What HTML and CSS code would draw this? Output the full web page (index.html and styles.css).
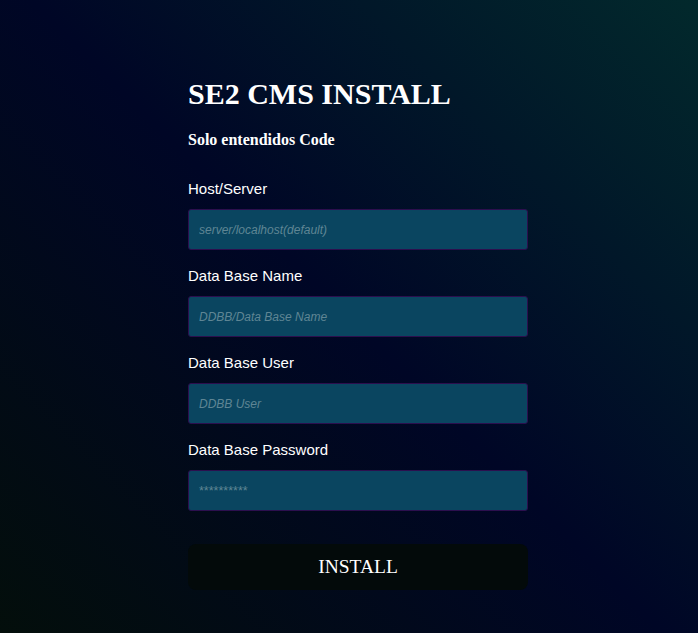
FILE: index.html
```html
<!DOCTYPE html>
<html lang="es">
<head>
<meta charset="utf-8">
<title>SE2 CMS INSTALL</title>
<link rel="stylesheet" href="styles.css">
</head>
<body>
<main class="page">
  <form class="install">
    <h1 class="title">SE2 CMS INSTALL</h1>
    <h4 class="subtitle">Solo entendidos Code</h4>
    <label class="label" for="host">Host/Server</label>
    <input class="field" id="host" type="text" placeholder="server/localhost(default)">
    <label class="label" for="dbname">Data Base Name</label>
    <input class="field" id="dbname" type="text" placeholder="DDBB/Data Base Name">
    <label class="label" for="dbuser">Data Base User</label>
    <input class="field" id="dbuser" type="text" placeholder="DDBB User">
    <label class="label" for="dbpass">Data Base Password</label>
    <input class="field field-pass" id="dbpass" type="password" placeholder="**********">
    <button class="submit" type="button">INSTALL</button>
  </form>
</main>
</body>
</html>
```
FILE: styles.css
```css
html, body {
  margin: 0;
  padding: 0;
}
body {
  min-height: 100vh;
  background: linear-gradient(45deg, #030e0b 0%, #000626 50%, #02292c 100%);
  font-family: "Liberation Serif", "Times New Roman", serif;
  color: #fff;
}
.page {
  padding: 76px 0 0 188px;
}
.install {
  width: 340px;
  display: flex;
  flex-direction: column;
}
.title {
  margin: 0;
  font-size: 30px;
  line-height: 36px;
  font-weight: bold;
}
.subtitle {
  margin: 18px 0 0;
  font-size: 16px;
  line-height: 20px;
  font-weight: bold;
}
.label {
  display: block;
  font-family: "Liberation Sans", Arial, sans-serif;
  font-size: 15px;
  line-height: 18px;
  margin-top: 17px;
  margin-bottom: 11px;
}
.subtitle + .label {
  margin-top: 30px;
}
.field {
  box-sizing: border-box;
  width: 340px;
  height: 41px;
  margin: 0;
  padding: 0 10px;
  border: 1px solid #2c0f4e;
  border-radius: 3px;
  background: #0a4560;
  color: #fff;
  font-family: "Liberation Sans", Arial, sans-serif;
  font-size: 12px;
  font-style: italic;
  outline: none;
}
.field::placeholder {
  color: #5f8594;
  font-style: italic;
}
.field-pass::placeholder {
  font-style: normal;
  font-size: 12.5px;
}
.submit {
  margin-top: 33px;
  width: 340px;
  height: 46px;
  border: none;
  border-radius: 8px;
  background: #030a0a;
  color: #fff;
  font-family: "Liberation Serif", "Times New Roman", serif;
  font-size: 19.5px;
  cursor: pointer;
}
```
